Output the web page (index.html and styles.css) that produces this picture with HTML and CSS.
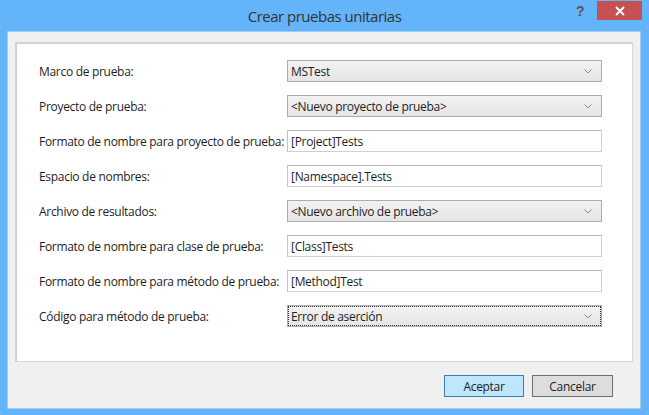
FILE: index.html
```html
<!DOCTYPE html>
<html lang="es">
<head>
<meta charset="utf-8">
<link rel="stylesheet" href="styles.css">
</head>
<body>
<div class="window">
  <div class="titlebar">
    <div class="title">Crear pruebas unitarias</div>
    <div class="help">?</div>
    <div class="close">
      <svg width="12" height="10" viewBox="0 0 12 10"><path d="M2 1 L10 9 M10 1 L2 9" stroke="#fff" stroke-width="2"/></svg>
    </div>
  </div>
  <div class="client">
    <div class="panel">
      <div class="row"><span class="label">Marco de prueba:</span><div class="combo"><span>MSTest</span><svg class="chev" width="8" height="5" viewBox="0 0 8 5"><polyline points="0.5,0.5 4,4 7.5,0.5" fill="none" stroke="#8a8a8a" stroke-width="1"/></svg></div></div>
      <div class="row"><span class="label">Proyecto de prueba:</span><div class="combo"><span>&lt;Nuevo proyecto de prueba&gt;</span><svg class="chev" width="8" height="5" viewBox="0 0 8 5"><polyline points="0.5,0.5 4,4 7.5,0.5" fill="none" stroke="#8a8a8a" stroke-width="1"/></svg></div></div>
      <div class="row"><span class="label">Formato de nombre para proyecto de prueba:</span><div class="text">[Project]Tests</div></div>
      <div class="row"><span class="label">Espacio de nombres:</span><div class="text">[Namespace].Tests</div></div>
      <div class="row"><span class="label">Archivo de resultados:</span><div class="combo"><span>&lt;Nuevo archivo de prueba&gt;</span><svg class="chev" width="8" height="5" viewBox="0 0 8 5"><polyline points="0.5,0.5 4,4 7.5,0.5" fill="none" stroke="#8a8a8a" stroke-width="1"/></svg></div></div>
      <div class="row"><span class="label">Formato de nombre para clase de prueba:</span><div class="text">[Class]Tests</div></div>
      <div class="row"><span class="label">Formato de nombre para método de prueba:</span><div class="text">[Method]Test</div></div>
      <div class="row"><span class="label">Código para método de prueba:</span><div class="combo focused"><span>Error de aserción</span><svg class="chev" width="8" height="5" viewBox="0 0 8 5"><polyline points="0.5,0.5 4,4 7.5,0.5" fill="none" stroke="#8a8a8a" stroke-width="1"/></svg></div></div>
    </div>
    <div class="buttons">
      <div class="btn primary">Aceptar</div>
      <div class="btn">Cancelar</div>
    </div>
  </div>
</div>
</body>
</html>
```

FILE: styles.css
```css
* { box-sizing: border-box; }
html, body { margin: 0; padding: 0; }
body {
  width: 649px;
  height: 415px;
  background: #64b4f9;
  font-family: "Open Sans", "Noto Sans", sans-serif;
  font-size: 12px;
  letter-spacing: -0.3px;
  color: #1e1e1e;
  overflow: hidden;
}
.window { width: 649px; height: 415px; }
.titlebar {
  height: 31px;
  position: relative;
  display: flex;
  align-items: center;
  justify-content: center;
}
.title {
  font-size: 15px;
  letter-spacing: -0.5px;
  color: #333;
  padding-top: 1px;
}
.help {
  position: absolute;
  left: 576px;
  top: 3px;
  font-size: 14px;
  font-weight: bold;
  color: #555;
  font-family: "Liberation Sans", sans-serif;
}
.close {
  position: absolute;
  left: 597px;
  top: 1px;
  width: 45px;
  height: 19px;
  background: #c75050;
  display: flex;
  align-items: center;
  justify-content: center;
}
.client {
  margin-left: 7px;
  width: 634px;
  height: 378px;
  background: #f0f0f0;
  border: 1px solid #9dcdf5;
  padding: 10px 7px 0 7px;
}
.panel {
  height: 320px;
  background: #fff;
  border-style: solid;
  border-width: 2px 1px 1px 2px;
  border-color: #d2d2d2 #d8d8d8 #d8d8d8 #d2d2d2;
  padding: 16px 30px 0 22px;
  display: flex;
  flex-direction: column;
  gap: 13px;
}
.row {
  height: 22px;
  display: flex;
  align-items: center;
  justify-content: space-between;
}
.label { white-space: nowrap; min-width: 0; }
.combo, .text {
  flex: none;
  width: 315px;
  height: 22px;
  display: flex;
  align-items: center;
  padding-left: 3px;
  white-space: nowrap;
}
.combo {
  background: linear-gradient(#f2f2f2, #e5e5e5);
  border: 1px solid #acacac;
  justify-content: space-between;
  padding-right: 9px;
}
.text {
  background: #fff;
  border: 1px solid #c4c4c4;
  border-color: #b6b6b6 #d0d0d0 #d0d0d0 #c4c4c4;
}
.focused {
  outline: 1px dotted #333;
  outline-offset: -2px;
}
.chev { display: block; }
.buttons {
  display: flex;
  justify-content: flex-end;
  gap: 8px;
  padding: 13px 20px 0 0;
}
.btn {
  width: 81px;
  height: 22px;
  display: flex;
  align-items: center;
  justify-content: center;
  background: #dddddd;
  border: 1px solid #707070;
  color: #1e1e1e;
}
.btn.primary {
  width: 80px;
  background: #bee6fd;
  border-color: #3c7fb1;
}
```
